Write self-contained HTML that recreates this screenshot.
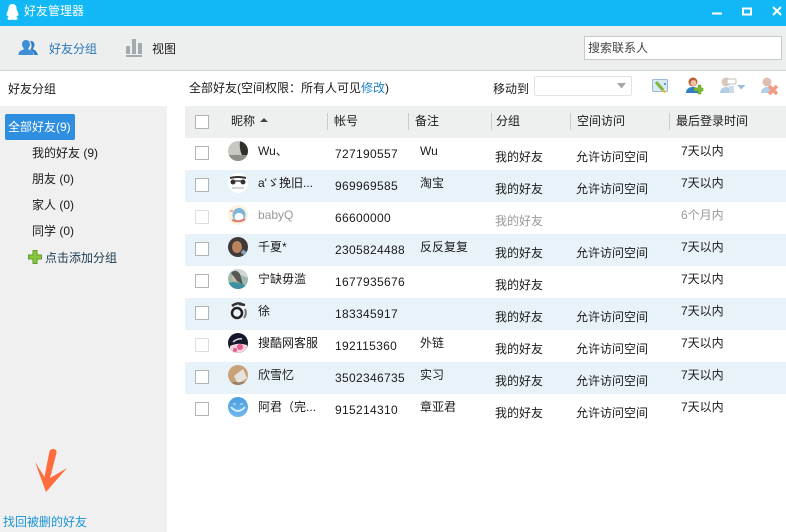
<!DOCTYPE html>
<html><head><meta charset="utf-8">
<style>
html,body{margin:0;padding:0}
body{width:786px;height:532px;overflow:hidden;background:#fff;position:relative;font:12px/16px "Liberation Sans","Noto Sans CJK SC",sans-serif;color:#1a1a1a}
.a{position:absolute;white-space:nowrap}
.r{position:absolute;left:185px;width:601px;height:32px}
.r.e{background:#e8f3f9}
.cb{position:absolute;left:195px;width:12px;height:12px;border:1px solid #b4b4b4;background:#fff}
.cb.d{border-color:#dedede}
.av{position:absolute;left:228px;width:20px;height:20px;border-radius:50%;overflow:hidden}
.n{letter-spacing:.33px}
.g{color:#999}
.sep{position:absolute;top:113px;width:1px;height:17px;background:#c9caca}
svg{position:absolute;overflow:visible}
.av svg{left:0;top:0}
</style></head><body>
<div class="a" style="left:0;top:0;width:786px;height:26px;background:#12b7f5"></div>
<svg style="left:6px;top:4px" width="13" height="17" viewBox="0 0 13 17"><path d="M6.500 0C3.500 0 2.400 2.400 2.400 5 2.400 6 1 7.500.6 10c-.3 1.500.3 2 .9 1.500L2.500 12.500 1.300 14.500C1.500 16 4 16.500 6.500 15.500 9 16.500 11.500 16 11.700 14.500L10.500 12.500 11.500 11.500c.6.500 1.200 0 .9-1.500C12 7.500 10.600 6 10.600 5 10.600 2.400 9.500 0 6.500 0Z" fill="#fff"/></svg>
<div class="a" style="left:24px;top:3px;color:#fff">好友管理器</div>
<svg style="left:0;top:0" width="786" height="26"><path d="M712 13.500h10" stroke="#fff" stroke-width="2"/><rect x="743" y="8.500" width="8" height="6" fill="none" stroke="#fff" stroke-width="2"/><path d="M773 7l8 8M781 7l-8 8" stroke="#fff" stroke-width="2"/></svg>

<div class="a" style="left:0;top:26px;width:786px;height:44px;background:#edeeee;border-bottom:1px solid #d5d6d6"></div>
<svg style="left:18px;top:39px" width="21" height="18" viewBox="0 0 21 18"><path d="M8 1c2.500 0 4 2 4 4.300 0 1.700-.8 3-1.600 3.900v1.300c2 .7 4.600 1.800 5 3.500v2H.6v-2c.4-1.700 3-2.800 5-3.500V9.200C4.800 8.300 4 7 4 5.300 4 3 5.500 1 8 1Z" fill="#3f8fd8"/><path d="M13 2c2.200 0 3.500 1.800 3.500 3.800 0 1.500-.6 2.600-1.300 3.400v1.200c1.800.6 3.400 2 3.800 3.400l1 2.200h-3.800c0-2.300-2-4-4-5 1-1.500 1.500-3 1.300-4.500 0-1.500-.5-3-1.500-4.200Z" fill="#2f7fc8"/></svg>
<div class="a" style="left:49px;top:41px;color:#2b78b8">好友分组</div>
<svg style="left:126px;top:38px" width="16" height="19"><rect x="0" y="8" width="4" height="8" fill="#a3aab0"/><rect x="6" y="1" width="4" height="15" fill="#a3aab0"/><rect x="12" y="5" width="4" height="11" fill="#a3aab0"/><rect x="0" y="17" width="16" height="2" fill="#a3aab0"/></svg>
<div class="a" style="left:152px;top:41px">视图</div>
<div class="a" style="left:584px;top:36px;width:196px;height:22px;border:1px solid #c6c7c7;background:#fff"></div>
<div class="a" style="left:588px;top:40px;color:#444">搜索联系人</div>

<div class="a" style="left:8px;top:81px">好友分组</div>
<div class="a" style="left:0;top:106px;width:167px;height:426px;background:#f0f0f0"></div>
<div class="a" style="left:5px;top:114px;width:70px;height:26px;background:#2e8ee0;border-radius:2px"></div>
<div class="a" style="left:8px;top:119px;color:#fff">全部好友(9)</div>
<div class="a" style="left:32px;top:145px">我的好友 (9)</div>
<div class="a" style="left:32px;top:171px">朋友 (0)</div>
<div class="a" style="left:32px;top:197px">家人 (0)</div>
<div class="a" style="left:32px;top:223px">同学 (0)</div>
<svg style="left:28px;top:250px" width="14" height="14"><path d="M5 .5h4v4.500h4.500v4H9v4.500H5V9H.5V5H5Z" fill="#8cc63f" stroke="#5f9e2a"/></svg>
<div class="a" style="left:45px;top:250px;color:#1c3a50">点击添加分组</div>
<svg style="left:0;top:0" width="80" height="532"><path d="M35 462L46 492 67 468 50 478 56.500 453C57 450 55 449 53 449 51 449 49.800 450 49.300 452L44.500 477Z" fill="#ff6d3f"/></svg>
<div class="a" style="left:3px;top:514px;color:#1b94d8">找回被删的好友</div>

<div class="a" style="left:189px;top:80px">全部好友(空间权限：所有人可见<span style="color:#1b7fc4">修改</span>)</div>
<div class="a" style="left:493px;top:81px">移动到</div>
<div class="a" style="left:534px;top:76px;width:96px;height:18px;border:1px solid #e3e3e3;border-radius:2px;background:#fff"></div>
<svg style="left:617px;top:83px" width="10" height="6"><path d="M0 0h9L4.500 5.500Z" fill="#a6a6a6"/></svg>
<svg style="left:652px;top:79px" width="17" height="16"><rect x=".5" y=".5" width="15" height="12" rx="1" fill="#dbe9f5" stroke="#9dbad6"/><path d="M4 3l7 8" stroke="#7cb83a" stroke-width="3"/><path d="M11 11l2 2.500" stroke="#e7b53c" stroke-width="2"/><rect x="12" y="4" width="2" height="2" fill="#6a95c0"/></svg>
<svg style="left:686px;top:77px" width="18" height="18"><circle cx="7" cy="5" r="4.500" fill="#b75c34"/><circle cx="7.500" cy="6" r="3" fill="#f2c3a0"/><path d="M0 16c0-4 3-6 7-6s6 2 7 6Z" fill="#2f7fc8"/><path d="M9 10h4V7h3v3h2v3h-2v3h-3v-3H9Z" fill="#7cba33" stroke="#5e9a25" stroke-width=".5" transform="translate(-1 1)"/></svg>
<svg style="left:720px;top:77px" width="17" height="18" opacity=".6"><circle cx="6" cy="5" r="4.500" fill="#c9a491"/><path d="M0 16c0-4 3-6 6-6s6 2 7 6Z" fill="#82aed6"/><rect x="7" y="2" width="9" height="5" rx="1" fill="#fff" stroke="#999"/><rect x="9" y="9" width="5" height="7" fill="#a9c4dc"/></svg>
<svg style="left:737px;top:85px" width="9" height="5"><path d="M0 0h8.500L4.200 4.500Z" fill="#9ebfdc"/></svg>
<svg style="left:761px;top:77px" width="18" height="18" opacity=".75"><circle cx="6" cy="5" r="4.500" fill="#d2ab97"/><path d="M0 16c0-4 3-6 6-6s6 2 7 6Z" fill="#9cc0de"/><path d="M8 9l8 8M16 9l-8 8" stroke="#ee7a5c" stroke-width="3.500"/></svg>

<div class="a" style="left:185px;top:106px;width:601px;height:32px;background:#eeefef"></div>
<div class="cb" style="top:115px"></div>
<div class="a" style="left:231px;top:113px">昵称</div>
<svg style="left:260px;top:118px" width="8" height="4"><path d="M0 4L4 0l4 4Z" fill="#444"/></svg>
<div class="sep" style="left:327px"></div><div class="a" style="left:334px;top:113px">帐号</div>
<div class="sep" style="left:408px"></div><div class="a" style="left:415px;top:113px">备注</div>
<div class="sep" style="left:491px"></div><div class="a" style="left:496px;top:113px">分组</div>
<div class="sep" style="left:570px"></div><div class="a" style="left:577px;top:113px">空间访问</div>
<div class="sep" style="left:669px"></div><div class="a" style="left:676px;top:113px">最后登录时间</div>

<div class="r e" style="top:170px"></div>
<div class="r e" style="top:234px"></div>
<div class="r e" style="top:298px"></div>
<div class="r e" style="top:362px"></div>

<!-- row 1 -->
<div class="cb" style="top:146px"></div>
<div class="av" style="top:141px;background:#c8c8c2"><svg width="20" height="20"><path d="M12 0h8v14l-6 0q-3-6-2-14Z" fill="#2f2f2c"/><path d="M0 14h20v6H0Z" fill="#8f8f88"/></svg></div>
<div class="a" style="left:258px;top:143px">Wu、</div><div class="a n" style="left:335px;top:146px">727190557</div><div class="a" style="left:420px;top:143px">Wu</div><div class="a" style="left:495px;top:149px">我的好友</div><div class="a" style="left:576px;top:149px">允许访问空间</div><div class="a" style="left:681px;top:143px">7天以内</div>
<!-- row 2 -->
<div class="cb" style="top:178px"></div>
<div class="av" style="top:173px;background:#fff"><svg width="20" height="20"><path d="M2 5q8-2 16 0" stroke="#333" stroke-width="2" fill="none"/><circle cx="5" cy="9" r="2.500" fill="#333"/><circle cx="15" cy="9" r="2.500" fill="#333"/><path d="M7 8h6" stroke="#555" stroke-width="1.500"/><path d="M4 15h12" stroke="#aaa"/></svg></div>
<div class="a" style="left:258px;top:175px">a'ゞ挽旧...</div><div class="a n" style="left:335px;top:178px">969969585</div><div class="a" style="left:420px;top:175px">淘宝</div><div class="a" style="left:495px;top:181px">我的好友</div><div class="a" style="left:576px;top:181px">允许访问空间</div><div class="a" style="left:681px;top:175px">7天以内</div>
<!-- row 3 -->
<div class="cb d" style="top:210px"></div>
<div class="av" style="top:205px;background:#fbf3df"><svg width="20" height="20"><ellipse cx="11" cy="10" rx="6.500" ry="7" fill="#7fb6d8"/><ellipse cx="11" cy="12" rx="4.500" ry="4" fill="#fff"/><path d="M4 15q7 3 13-1" stroke="#e7776a" stroke-width="2" fill="none"/><path d="M2 6l3 0" stroke="#f3a9a0" stroke-width="2"/></svg></div>
<div class="a g" style="left:258px;top:207px">babyQ</div><div class="a n" style="left:335px;top:210px">66600000</div><div class="a g" style="left:495px;top:213px">我的好友</div><div class="a g" style="left:681px;top:207px">6个月内</div>
<!-- row 4 -->
<div class="cb" style="top:242px"></div>
<div class="av" style="top:237px;background:#3f3a38"><svg width="20" height="20"><ellipse cx="9" cy="10" rx="5" ry="6" fill="#b9845e"/><path d="M14 14l5 4" stroke="#87a5b8" stroke-width="4"/></svg></div>
<div class="a" style="left:258px;top:239px">千夏*</div><div class="a n" style="left:335px;top:242px">2305824488</div><div class="a" style="left:420px;top:239px">反反复复</div><div class="a" style="left:495px;top:245px">我的好友</div><div class="a" style="left:576px;top:245px">允许访问空间</div><div class="a" style="left:681px;top:239px">7天以内</div>
<!-- row 5 -->
<div class="cb" style="top:274px"></div>
<div class="av" style="top:269px;background:#9fb8ad"><svg width="20" height="20"><path d="M0 0h20v9L8 4Z" fill="#cfd8d2"/><ellipse cx="8" cy="8" rx="4" ry="4.500" fill="#d9b8a5"/><path d="M3 4q5-5 9 1l3 11-6-4Z" fill="#36403f" opacity=".8"/><path d="M0 14q8-3 20 4v2H0Z" fill="#3f8fa3"/></svg></div>
<div class="a" style="left:258px;top:271px">宁缺毋滥</div><div class="a n" style="left:335px;top:274px">1677935676</div><div class="a" style="left:495px;top:277px">我的好友</div><div class="a" style="left:681px;top:271px">7天以内</div>
<!-- row 6 -->
<div class="cb" style="top:306px"></div>
<div class="av" style="top:301px;background:#eef2f4"><svg width="20" height="20"><circle cx="9" cy="12" r="5" fill="none" stroke="#222" stroke-width="2.500"/><path d="M4 5q5-4 10-2M11 3l6 1" stroke="#333" stroke-width="2.500" fill="none"/><path d="M17 8q2 5-1 9" stroke="#777" stroke-width="2" fill="none"/></svg></div>
<div class="a" style="left:258px;top:303px">徐</div><div class="a n" style="left:335px;top:306px">183345917</div><div class="a" style="left:495px;top:309px">我的好友</div><div class="a" style="left:576px;top:309px">允许访问空间</div><div class="a" style="left:681px;top:303px">7天以内</div>
<!-- row 7 -->
<div class="cb d" style="top:338px"></div>
<div class="av" style="top:333px;background:#16162c"><svg width="20" height="20"><path d="M5 9q5-4 9-3" stroke="#ddd" stroke-width="1.500" fill="none"/><path d="M2 13q8-4 17-1v8H2Z" fill="#f4d4dc"/><circle cx="12" cy="14" r="3" fill="#ea5a93"/><circle cx="7" cy="17" r="2" fill="#ea5a93"/></svg></div>
<div class="a" style="left:258px;top:335px">搜酷网客服</div><div class="a n" style="left:335px;top:338px">192115360</div><div class="a" style="left:420px;top:335px">外链</div><div class="a" style="left:495px;top:341px">我的好友</div><div class="a" style="left:576px;top:341px">允许访问空间</div><div class="a" style="left:681px;top:335px">7天以内</div>
<!-- row 8 -->
<div class="cb" style="top:370px"></div>
<div class="av" style="top:365px;background:#c9a27a"><svg width="20" height="20"><path d="M6 11l9-7 4 9-9 6Z" fill="#e6e2dc"/><path d="M0 17h20v3H0Z" fill="#6b5a4a" opacity=".5"/></svg></div>
<div class="a" style="left:258px;top:367px">欣雪忆</div><div class="a n" style="left:335px;top:370px">3502346735</div><div class="a" style="left:420px;top:367px">实习</div><div class="a" style="left:495px;top:373px">我的好友</div><div class="a" style="left:576px;top:373px">允许访问空间</div><div class="a" style="left:681px;top:367px">7天以内</div>
<!-- row 9 -->
<div class="cb" style="top:402px"></div>
<div class="av" style="top:397px;background:linear-gradient(#4a9fe0,#6fb8ea)"><svg width="20" height="20"><path d="M3 10q7 8 14 0" stroke="#d4ecfa" stroke-width="2" fill="none"/><path d="M5 7h3M12 7h3" stroke="#d4ecfa"/></svg></div>
<div class="a" style="left:258px;top:399px">阿君（完...</div><div class="a n" style="left:335px;top:402px">915214310</div><div class="a" style="left:420px;top:399px">章亚君</div><div class="a" style="left:495px;top:405px">我的好友</div><div class="a" style="left:576px;top:405px">允许访问空间</div><div class="a" style="left:681px;top:399px">7天以内</div>
</body></html>
